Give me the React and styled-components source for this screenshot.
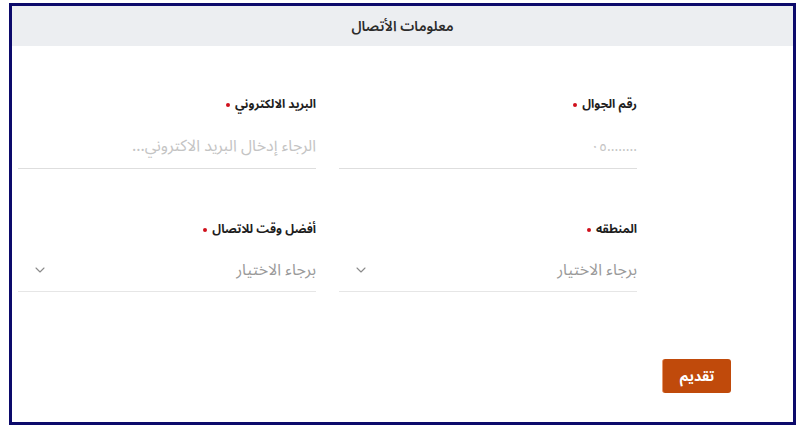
import styled, { createGlobalStyle } from "styled-components";
import { ChevronDown } from "lucide-react";

const GlobalStyle = createGlobalStyle`
  body {
    margin: 0;
    background: #fff;
    font-family: "Noto Sans Arabic", "Noto Naskh Arabic", "DejaVu Sans", sans-serif;
  }
`;

const Card = styled.section`
  direction: rtl;
  box-sizing: border-box;
  width: 787px;
  height: 422px;
  margin: 3px 0 0 9px;
  border: 3px solid #0c0a6b;
  background: #fff;
  display: flex;
  flex-direction: column;
`;

const Header = styled.header`
  height: 40px;
  background: #eceef1;
  display: flex;
  align-items: center;
  justify-content: center;
  font-size: 14px;
  font-weight: 600;
  color: #2b2b2b;
`;

const Body = styled.div`
  flex: 1;
  padding: 50px 156px 0 6px;
  display: flex;
  flex-direction: column;
`;

const Grid = styled.div`
  display: grid;
  grid-template-columns: 298px 298px;
  column-gap: 23px;
  row-gap: 52px;
  justify-content: start;
`;

const Field = styled.div`
  display: flex;
  flex-direction: column;
`;

const Label = styled.label`
  font-size: 12px;
  font-weight: 700;
  line-height: 18px;
  color: #1e1e1e;
  display: flex;
  align-items: center;
  gap: 5px;
`;

const Required = styled.span`
  width: 4px;
  height: 4px;
  border-radius: 50%;
  background: #d0101c;
`;

const Input = styled.input`
  box-sizing: border-box;
  height: 45px;
  margin-top: 10px;
  border: 0;
  border-bottom: 1px solid #dedede;
  outline: none;
  padding: 0;
  font: inherit;
  font-size: ${(p) => (p.$ltr ? "14px" : "16px")};
  direction: ${(p) => (p.$ltr ? "ltr" : "rtl")};
  text-align: right;
  &::placeholder {
    color: #c4c4c4;
  }
`;

const Select = styled.div`
  box-sizing: border-box;
  height: 44px;
  margin-top: 9px;
  border-bottom: 1px solid #e6e6e6;
  display: flex;
  align-items: center;
  justify-content: space-between;
  font-size: 16px;
  color: #9a9a9a;
  padding-left: 14px;
  svg {
    color: #8a8a8a;
  }
`;

const Actions = styled.div`
  display: flex;
  justify-content: flex-start;
  padding: 67px 62px 0 0;
  margin-right: -156px;
`;

const Submit = styled.button`
  width: 69px;
  height: 34px;
  border: 0;
  border-left: 1px solid #e89a6e;
  border-radius: 3px;
  background: #c04a0b;
  color: #fff;
  font: inherit;
  font-size: 14px;
  font-weight: 700;
  cursor: pointer;
`;

export default function App() {
  return (
    <>
      <GlobalStyle />
      <Card>
        <Header>معلومات الأتصال</Header>
        <Body>
          <Grid>
            <Field>
              <Label>
                رقم الجوال <Required />
              </Label>
              <Input $ltr placeholder="٠٥........" />
            </Field>
            <Field>
              <Label>
                البريد الالكتروني <Required />
              </Label>
              <Input placeholder="الرجاء إدخال البريد الاكتروني..." />
            </Field>
            <Field>
              <Label>
                المنطقه <Required />
              </Label>
              <Select>
                <span>برجاء الاختيار</span>
                <ChevronDown size={16} strokeWidth={1.6} />
              </Select>
            </Field>
            <Field>
              <Label>
                أفضل وقت للاتصال <Required />
              </Label>
              <Select>
                <span>برجاء الاختيار</span>
                <ChevronDown size={16} strokeWidth={1.6} />
              </Select>
            </Field>
          </Grid>
          <Actions>
            <Submit>تقديم</Submit>
          </Actions>
        </Body>
      </Card>
    </>
  );
}
